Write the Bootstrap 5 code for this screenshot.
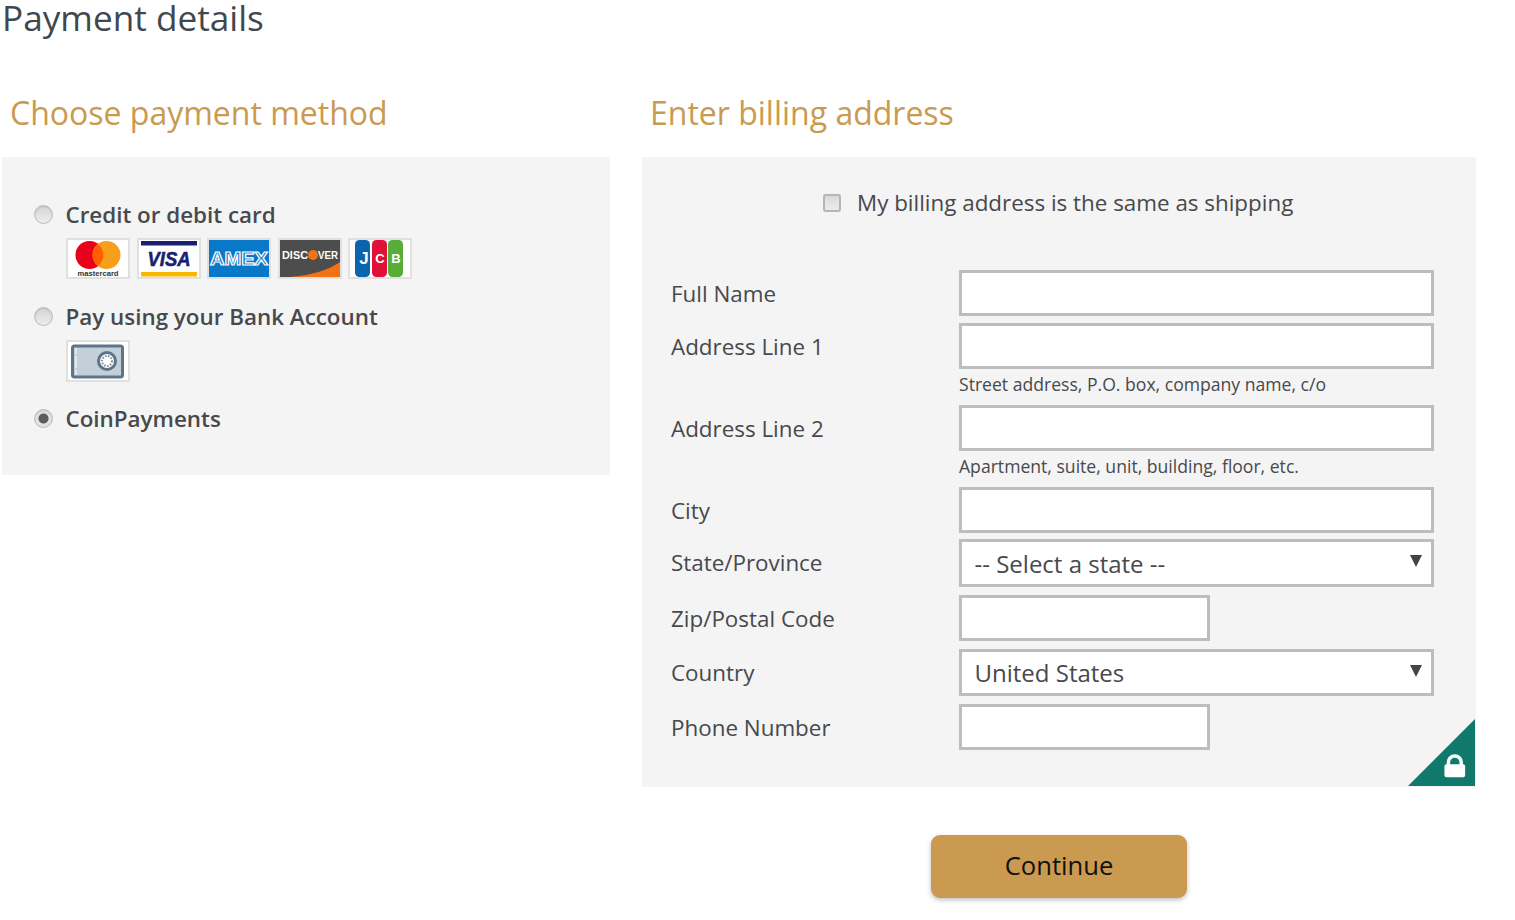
<!DOCTYPE html>
<html lang="en">
<head>
<meta charset="utf-8">
<title>Payment details</title>
<link href="https://cdn.jsdelivr.net/npm/bootstrap@5.3.0/dist/css/bootstrap.min.css" rel="stylesheet">
<style>
html,body{height:920px;overflow:hidden;background:#fff}
body{font-family:"Open Sans",sans-serif;color:#47494d;padding-left:2px}
.pg-title{font-size:35.2px;line-height:46px;margin:-6px 0 0;color:#41474d;font-weight:400;height:97px}
.col-left{width:608px}
.col-right{width:834px}
.cols{gap:32px}
.sec-title{font-size:32px;line-height:44px;margin:0 0 22px 8px;color:#c99a50;font-weight:400;height:44px}
.pane{background:#f4f4f4}
.pane-left{height:318px;padding:45px 32px 0}
.pane-right{height:630px;padding:0 42px 0 29px;overflow:hidden}
.radio-ui{appearance:none;-webkit-appearance:none;width:19px;height:19px;border-radius:50%;border:1px solid #bdbdbd;background:linear-gradient(#d5d5d5,#ececec);box-shadow:inset 0 1px 2px rgba(0,0,0,.12);margin:0 12.500px 0 0;flex:none}
.radio-ui.on{background:radial-gradient(circle,#5c5c5c 0 4.5px,#e2e2e2 5.5px)}
.pay-label{font-size:22.4px;line-height:24px;font-weight:600;margin:0;color:#47494d;padding-top:2px}
.pay-opt{height:24px}
.opt-bank{margin-top:25px}
.opt-coin{margin-top:24px}
.logos{gap:6.5px;padding-left:32px;margin-top:12px}
.pay-card{display:block;width:64px;height:41px;border:2px solid #e0e0e0;background:#fff;flex:none}
.bank-logo{height:42px;margin-left:32px;margin-top:12px}
.chk-row{height:92px;padding:33px 0 0 152px}
.chk-ui{appearance:none;-webkit-appearance:none;width:18px;height:18px;border-radius:3px;border:2px solid #b5b5b5;background:linear-gradient(#d9d9d9,#ececec);margin:4px 16px 0 0;flex:none}
.chk-label{font-size:22.4px;line-height:26px;margin:0;color:#47494d}
.field{margin-top:7px}
.field-first{margin-top:21px}
.field-gap8{margin-top:8px}
.field-gap6{margin-top:6px}
.field-lab{width:288px;font-size:22.4px;line-height:30px;margin:0;flex:none;color:#47494d;padding-top:2px}
.field-lab.lab-flat{padding-top:0}
.field-in{width:475px;height:46px;border:3px solid #bdbdbd;background:#fff;border-radius:0;padding:0 12.500px;font-size:24px;color:#47494d;display:block}
.field-in.short{width:251px}
.field-in.tall{height:48px;padding-top:2px}
.field-in.mid{height:47px}
.field-in.pick{appearance:none;-webkit-appearance:none;line-height:40px;background-image:url("data:image/svg+xml,%3Csvg xmlns='http://www.w3.org/2000/svg' width='12' height='12'%3E%3Cpath d='M0 0h12L6 12z' fill='%23444'/%3E%3C/svg%3E");background-repeat:no-repeat;background-position:right 9px top 13px;background-size:12px 12px;font-family:inherit}
.hint{font-size:17.6px;line-height:24px;margin:3px 0 0;color:#47494d;height:25px;padding-left:288px}
.seal{width:67px;height:67px;margin:-31px -41px 0 auto;display:block}
.go-wrap{margin-top:48px;padding-left:289px}
.go-btn{width:256px;height:63px;background:#c99a50;border:0;border-radius:9px;font-size:25.6px;color:#111;box-shadow:0 2px 5px rgba(0,0,0,.25);padding:0}
</style>
</head>
<body>
<h1 class="pg-title">Payment details</h1>
<div class="d-flex cols">
  <div class="col-left">
    <h2 class="sec-title">Choose payment method</h2>
    <div class="pane pane-left">
      <div class="d-flex align-items-center pay-opt"><input type="radio" name="pm" class="radio-ui"><label class="pay-label">Credit or debit card</label></div>
      <div class="d-flex logos">
        <svg class="pay-card" viewBox="0 0 60 37"><circle cx="21.500" cy="15" r="14" fill="#eb001b"/><circle cx="38.500" cy="15" r="14" fill="#f79e1b"/><path d="M30 4a14 14 0 0 1 0 22a14 14 0 0 1 0-22z" fill="#ff5f00"/><text x="30" y="35.500" font-size="7.500" font-weight="700" text-anchor="middle" fill="#333" font-family="Liberation Sans" textLength="41" lengthAdjust="spacingAndGlyphs">mastercard</text></svg>
        <svg class="pay-card" viewBox="0 0 60 37"><rect x="2" y="1" width="56" height="4.500" fill="#1a1f71"/><rect x="2" y="32" width="56" height="4.500" fill="#f7b600"/><text x="30" y="26" font-size="21" font-weight="700" font-style="italic" text-anchor="middle" fill="#1a1f71" stroke="#1a1f71" stroke-width=".6" font-family="Liberation Sans" textLength="43" lengthAdjust="spacingAndGlyphs">VISA</text></svg>
        <svg class="pay-card" viewBox="0 0 60 37"><rect width="60" height="37" fill="#0a78c8"/><text x="30" y="25" font-size="19" font-weight="700" text-anchor="middle" fill="#0a78c8" stroke="#fff" stroke-width="1.200" font-family="Liberation Sans" textLength="58" lengthAdjust="spacingAndGlyphs">AMEX</text></svg>
        <svg class="pay-card" viewBox="0 0 60 37"><rect width="60" height="37" fill="#4d4d4d"/><path d="M11 37C32 35 49 30 60 22V37z" fill="#f47216"/><text x="2" y="19" font-size="11" font-weight="700" fill="#fff" font-family="Liberation Sans" textLength="26" lengthAdjust="spacingAndGlyphs">DISC</text><circle cx="33" cy="15" r="5" fill="#f47216"/><text x="38" y="19" font-size="11" font-weight="700" fill="#fff" font-family="Liberation Sans" textLength="20" lengthAdjust="spacingAndGlyphs">VER</text></svg>
        <svg class="pay-card" viewBox="0 0 60 37"><rect x="5" y="0" width="15" height="37" rx="4.500" fill="#0b64ac"/><rect x="22" y="0" width="15" height="37" rx="4.500" fill="#e0103a"/><rect x="38" y="0" width="15" height="37" rx="4.500" fill="#57ad38"/><text x="14" y="24" font-size="17" font-weight="700" text-anchor="middle" fill="#fff" font-family="Liberation Sans">J</text><text x="30" y="23" font-size="13" font-weight="700" text-anchor="middle" fill="#fff" font-family="Liberation Sans">C</text><text x="46" y="23" font-size="13" font-weight="700" text-anchor="middle" fill="#fff" font-family="Liberation Sans">B</text></svg>
      </div>
      <div class="d-flex align-items-center pay-opt opt-bank"><input type="radio" name="pm" class="radio-ui"><label class="pay-label">Pay using your Bank Account</label></div>
      <svg class="pay-card bank-logo" viewBox="0 0 60 38"><rect x="4.500" y="4" width="50" height="31" rx="2" fill="#c3d0d9" stroke="#5e7589" stroke-width="3"/><path d="M8 6v27" stroke="#fff" stroke-width="1" stroke-dasharray="6 2 12 2"/><circle cx="39" cy="19" r="10" fill="#5e7589"/><circle cx="39" cy="19" r="7" fill="#fff"/><circle cx="39" cy="19" r="5" fill="none" stroke="#7b8d9b" stroke-width="2" stroke-dasharray="1.500 1.500"/></svg>
      <div class="d-flex align-items-center pay-opt opt-coin"><input type="radio" name="pm" class="radio-ui on" checked><label class="pay-label">CoinPayments</label></div>
    </div>
  </div>
  <div class="col-right">
    <h2 class="sec-title">Enter billing address</h2>
    <div class="pane pane-right">
      <div class="d-flex align-items-start chk-row"><input type="checkbox" class="chk-ui"><label class="chk-label">My billing address is the same as shipping</label></div>
      <div class="d-flex align-items-center field field-first"><label class="field-lab">Full Name</label><input class="field-in" type="text"></div>
      <div class="d-flex align-items-center field"><label class="field-lab">Address Line 1</label><input class="field-in" type="text"></div>
      <div class="hint">Street address, P.O. box, company name, c/o</div>
      <div class="d-flex align-items-center field field-gap8"><label class="field-lab">Address Line 2</label><input class="field-in" type="text"></div>
      <div class="hint">Apartment, suite, unit, building, floor, etc.</div>
      <div class="d-flex align-items-center field field-gap8"><label class="field-lab">City</label><input class="field-in" type="text"></div>
      <div class="d-flex align-items-center field field-gap6"><label class="field-lab lab-flat">State/Province</label><select class="field-in pick tall"><option>-- Select a state --</option></select></div>
      <div class="d-flex align-items-center field field-gap8"><label class="field-lab">Zip/Postal Code</label><input class="field-in short" type="text"></div>
      <div class="d-flex align-items-center field field-gap8"><label class="field-lab lab-flat">Country</label><select class="field-in pick mid"><option>United States</option></select></div>
      <div class="d-flex align-items-center field field-gap8"><label class="field-lab">Phone Number</label><input class="field-in short" type="text"></div>
      <svg class="seal" viewBox="0 0 68 68"><path d="M68 0V68H0z" fill="#10796b"/><rect x="37" y="46" width="21" height="13" rx="2" fill="#fff"/><path d="M41 47v-3a6.500 6.500 0 0 1 13 0v3" fill="none" stroke="#fff" stroke-width="3.500"/></svg>
    </div>
    <div class="go-wrap"><button class="go-btn" type="button">Continue</button></div>
  </div>
</div>
<script src="https://cdn.jsdelivr.net/npm/bootstrap@5.3.0/dist/js/bootstrap.bundle.min.js"></script>
</body>
</html>
